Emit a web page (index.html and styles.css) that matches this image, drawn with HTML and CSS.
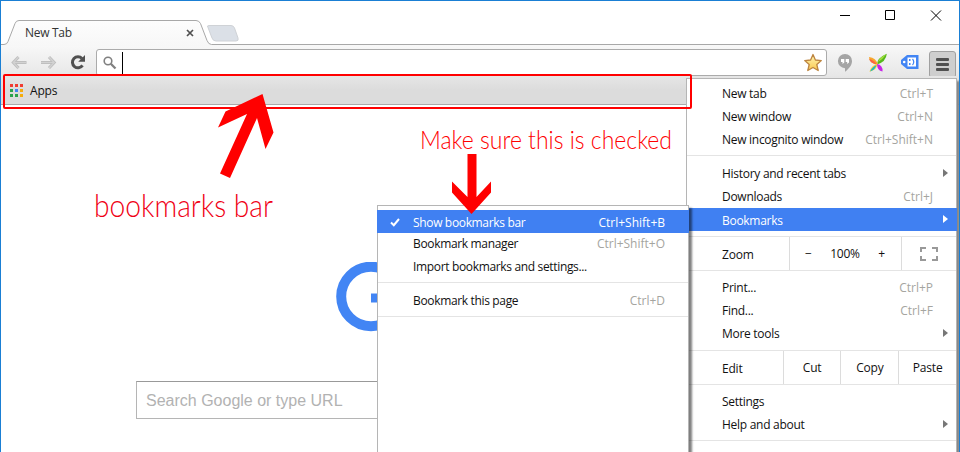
FILE: index.html
```html
<!DOCTYPE html>
<html lang="en">
<head>
<meta charset="utf-8">
<title>New Tab</title>
<link rel="stylesheet" href="styles.css">
</head>
<body>
<div class="window">
  <header class="tabstrip">
    <svg class="tabs" width="250" height="26" viewBox="0 0 250 26">
      <defs><linearGradient id="tab" x1="0" y1="0" x2="0" y2="1"><stop offset="0" stop-color="#fdfdfd"/><stop offset="1" stop-color="#f7f7f7"/></linearGradient></defs>
      <path d="M207 7.500 Q205.500 5.500 208 5.500 H230 Q232.500 5.500 233.500 8 L237 18 Q238 21 235 21 H215 Q212 21 211 18Z" fill="#dbe0e7" stroke="#cfd2d6" stroke-width="1"/>
      <path d="M0 24.500 H3 Q6 24.500 7 21.500 L14 3.500 Q15 .5 18 .5 H195 Q198 .5 199.500 3.500 L206 20.500 Q207.500 24.500 210.500 24.500 H250 V26 H0Z" fill="url(#tab)"/>
      <path d="M0 24.500 H3 Q6 24.500 7 21.500 L14 3.500 Q15 .5 18 .5 H195 Q198 .5 199.500 3.500 L206 20.500 Q207.500 24.500 210.500 24.500 H250" fill="none" stroke="#a8a8a8"/>
    </svg>
    <span class="tab-title">New Tab</span>
    <svg class="tab-close" width="8" height="8" viewBox="0 0 8 8"><path d="M1 1 7 7M7 1 1 7" stroke="#505050" stroke-width="1.700"/></svg>
    <svg class="controls" width="102" height="12" viewBox="0 0 102 12" fill="none" stroke="#000"><path d="M0 5.500H10M45.500 .5H54.500V9.500H45.500ZM91 .5 101 10.500M101 .5 91 10.500"/></svg>
  </header>
  <div class="toolbar">
    <svg class="nav" width="76" height="20" viewBox="0 0 76 20" fill="none">
      <path d="M7.500 4 2.300 9.500 7.500 15M2.500 9.500H15.500M38 4 43.200 9.500 38 15M43 9.500H30" stroke="#bfbfbf" stroke-width="3"/>
      <path d="M7.500 4 2.300 9.500 7.500 15M2.500 9.500H15.500M38 4 43.200 9.500 38 15M43 9.500H30" stroke="#d2d2d2" stroke-width="1.200"/>
      <path d="M71 5.600A5.500 5.500 0 1 0 71.500 12.400" stroke="#505050" stroke-width="3"/>
      <path d="M74 2V8.800H67.200Z" fill="#505050"/>
    </svg>
    <div class="omnibox">
      <svg width="14" height="14" viewBox="0 0 14 14" fill="none" stroke="#808080"><circle cx="5" cy="5" r="3.800" stroke-width="1.600"/><path d="M7.800 7.800 12.500 12.500" stroke-width="2.300"/></svg>
      <i class="caret"></i>
      <svg class="star" width="20" height="20" viewBox="0 0 20 20"><defs><linearGradient id="gold" x1="0" y1="0" x2="0" y2="1"><stop stop-color="#fff5b4"/><stop offset="1" stop-color="#fac94f"/></linearGradient></defs><path d="M10 1.500 12.400 7 18.300 7.600 13.800 11.500 15.200 17.500 10 14.500 4.800 17.500 6.200 11.500 1.700 7.600 7.600 7Z" fill="url(#gold)" stroke="#bd8540" stroke-width="1.300" stroke-linejoin="round"/></svg>
    </div>
    <svg class="hangouts" width="16" height="18" viewBox="0 0 16 18"><path d="M8 0A7 7 0 0 1 15 7.200C15 11.500 11 15.500 8 17.800V14.200A7 7 0 0 1 8 0Z" fill="#a5a5a5"/><path d="M4 5H7.300V8.500L5.500 10V8H4ZM8.700 5H12V8.500L10.200 10V8H8.700Z" fill="#fff"/></svg>
    <svg class="wings" width="20" height="20" viewBox="0 0 20 20"><path d="M9 11.500Q9 5 18.800 .8Q18 9 9 11.500Z" fill="#55b81c"/><path d="M10 9Q12 4 18.500 1Q15 6 10 9Z" fill="#a7df3e"/><path d="M10 12Q1 10.500 1 4Q8 4.500 10 12Z" fill="#f6a72c"/><path d="M9 11.500Q2 10 1.200 6Q6 7 9 11.500Z" fill="#fb6341"/><path d="M10 10.500Q9 17 1.500 18.800Q3 12.500 10 10.500Z" fill="#ffd237"/><path d="M8.500 12Q7 17 2 18.500Q4 14 8.500 12Z" fill="#15b8cf"/><path d="M9 11Q15 12 14.500 18.500Q9 17.500 9 11Z" fill="#c724e8"/></svg>
    <svg class="label" width="20" height="16" viewBox="0 0 20 16"><path d="M7 1H18.500V15H7L1 10V6Z" fill="#4285f4"/><circle cx="4.200" cy="8" r="1.300" fill="#fff"/><rect x="7.500" y="3.500" width="8.500" height="9" fill="#fff"/><path d="M9 5H10.500V7H9ZM9 9H10.500V11H9Z" fill="#4285f4"/><path d="M12.500 5Q15 8 12.500 11" fill="none" stroke="#4285f4" stroke-width="1.200"/></svg>
    <div class="menu-button"><i></i><i></i><i></i></div>
  </div>
  <div class="bookmarks">
    <svg width="13" height="13" viewBox="0 0 13 13"><path d="M0 0h3v3H0zM5 0h3v3H5zM10 0h3v3h-3z" fill="#f03c32"/><path d="M0 5h3v3H0zM0 10h3v3H0zM5 10h3v3H5z" fill="#2ba24c"/><path d="M5 5h3v3H5z" fill="#4285f4"/><path d="M10 5h3v3h-3zM10 10h3v3h-3z" fill="#f5ac0c"/></svg>
    <span>Apps</span>
  </div>
  <main class="page">
    <svg class="logo" width="72" height="70" viewBox="0 0 72 70"><circle cx="36" cy="34.500" r="29.800" fill="none" stroke="#4285f4" stroke-width="10"/><path d="M36 31.500H66V40.500H36Z" fill="#4285f4"/></svg>
    <div class="search">Search Google or type URL</div>
  </main>

  <nav class="menu main">
    <div class="item"><span>New tab</span><kbd>Ctrl+T</kbd></div>
    <div class="item"><span>New window</span><kbd>Ctrl+N</kbd></div>
    <div class="item"><span>New incognito window</span><kbd>Ctrl+Shift+N</kbd></div>
    <hr>
    <div class="item"><span>History and recent tabs</span><b class="arrow"></b></div>
    <div class="item"><span>Downloads</span><kbd>Ctrl+J</kbd></div>
    <div class="item active"><span>Bookmarks</span><b class="arrow"></b></div>
    <div class="strip zoom"><span class="name">Zoom</span><div class="cell stepper"><span>−</span><span>100%</span><span>+</span></div><div class="cell"><svg width="18" height="14" viewBox="0 0 18 14" fill="none" stroke="#999" stroke-width="2"><path d="M1 5V1H6M12 1H17V5M17 9V13H12M6 13H1V9"/></svg></div></div>
    <div class="item"><span>Print...</span><kbd>Ctrl+P</kbd></div>
    <div class="item"><span>Find...</span><kbd>Ctrl+F</kbd></div>
    <div class="item"><span>More tools</span><b class="arrow"></b></div>
    <div class="strip edit"><span class="name">Edit</span><span class="cell">Cut</span><span class="cell">Copy</span><span class="cell">Paste</span></div>
    <div class="item"><span>Settings</span></div>
    <div class="item"><span>Help and about</span><b class="arrow"></b></div>
    <hr>
  </nav>

  <nav class="menu sub">
    <div class="item active"><svg class="check" width="10" height="9" viewBox="0 0 10 9"><path d="M1 4.500 3.800 7.200 9 1" fill="none" stroke="#fff" stroke-width="2"/></svg><span>Show bookmarks bar</span><kbd>Ctrl+Shift+B</kbd></div>
    <div class="item manager"><span>Bookmark manager</span><kbd>Ctrl+Shift+O</kbd></div>
    <div class="item import"><span>Import bookmarks and settings...</span></div>
    <hr>
    <div class="item"><span>Bookmark this page</span><kbd>Ctrl+D</kbd></div>
    <hr>
  </nav>

  <svg class="notes" width="960" height="452" viewBox="0 0 960 452">
    <rect x="4" y="75" width="687" height="33" rx="1" fill="none" stroke="#f00" stroke-width="2"/>
    <path d="M262.500 94 273.500 132.500 265.500 149 257 118 230 178 220 173.500 247 114 218 127.500 225.500 111.500Z" fill="#f00"/>
    <path d="M467.500 154H476.500V197L491 181.500V192.500L471.500 214 452 192.500V181.500L467.500 197Z" fill="#f00"/>
    <text x="94" y="217" font-size="30.500" textLength="179" lengthAdjust="spacingAndGlyphs">bookmarks bar</text>
    <text class="pure" x="420" y="149" font-size="24.500" textLength="252" lengthAdjust="spacingAndGlyphs">Make sure this is checked</text>
  </svg>
</div>
</body>
</html>
```
FILE: styles.css
```css
* { box-sizing: border-box; }
body { margin: 0; background: #fff; font: 12px/23px "Open Sans", "Noto Sans", sans-serif; color: #111; }
.window { position: relative; width: 960px; height: 452px; overflow: hidden; display: flex; flex-direction: column; border: solid #1a7fd4; border-width: 1px 1px 0; }
.tabstrip { position: relative; height: 44px; flex: none; display: flex; padding-top: 20px; }
.tabstrip::before { content: ""; position: absolute; left: 249px; right: 0; bottom: 0; height: 1px; background: #a8a8a8; }
.tabs { position: absolute; left: 0; top: 19px; }
.tab-title { position: relative; margin-left: 24px; width: 161px; color: #333; letter-spacing: -.3px; }
.tab-close { position: relative; margin-top: 8px; }
.controls { margin: -11px 17px 0 auto; }
.toolbar { height: 31px; flex: none; display: flex; padding-left: 10px; background: linear-gradient(#f8f8f8, #e7e7e7); }
.nav { margin-top: 8px; }
.omnibox { width: 731px; height: 27px; margin: 4px 0 0 9px; padding: 0 3px 0 6px; display: flex; align-items: center; background: #fff; border: 1px solid #ababab; border-radius: 3px; }
.caret { width: 1px; height: 22px; margin-left: 5px; background: #000; }
.star { margin-left: auto; }
.hangouts { margin: 9px 0 0 10px; }
.wings { margin: 8px 0 0 15px; }
.label { margin: 9px 0 0 12px; }
.menu-button { width: 27px; height: 27px; margin: 6px 0 0 9px; padding: 6px; border: 1px solid #a0a0a0; border-radius: 3px; background: #cecece; display: flex; flex-direction: column; gap: 2px; }
.menu-button i { height: 3px; border-radius: 1px; background: #505050; }
.bookmarks { height: 29px; flex: none; display: flex; align-items: center; padding: 0 0 0 9px; background: linear-gradient(#e6e6e6, #dcdcdc 50%); border-bottom: 1px solid #aaa; }
.bookmarks span { margin-left: 7px; letter-spacing: -.2px; }
.page { flex: 1; display: flex; flex-direction: column; }
.logo { margin: 157px 0 0 334px; }
.search { margin: 49px 0 0 135px; width: 580px; height: 38px; border: 1px solid #b5b5b5; border-top-color: #999; padding-left: 9px; font: 16px/37px "Liberation Sans", Arial, sans-serif; color: #b2b2b2; }
.menu { position: absolute; background: #fff; border: 1px solid #b5b5b5; }
.main { left: 685px; top: 77px; width: 271px; height: 390px; padding-top: 3px; box-shadow: 3px 3px 2px #888; }
.sub { left: 376px; top: 204px; width: 312px; height: 280px; padding-top: 4px; box-shadow: 3px 3px 2px rgba(0,0,0,.5); }
.item { display: flex; height: 23px; padding-left: 35px; padding-right: 23px; }
.item span { letter-spacing: -.28px; }
.main .active { margin: 0 -1px; padding-left: 36px; line-height: 25px; }
.sub .item { position: relative; padding-right: 23px; }
.item kbd { margin-left: auto; font: inherit; color: #a5a5a0; }
.item.active, .active kbd { color: #fff; }
.item.active { background: #4080f2; font-weight: 500; }
.sub .active { margin: 0 -1px; padding-left: 36px; padding-right: 24px; line-height: 25px; }
.sub .item span { letter-spacing: -.34px; }
.sub .manager { margin-top: -1px; }
.check { position: absolute; left: 13px; top: 8px; }
.arrow { width: 0; height: 0; margin: 7px -15px 0 auto; border: solid transparent; border-width: 4px 0 4px 5px; border-left-color: #777; }
.active .arrow { border-left-color: #fff; margin-right: -14px; }
hr { height: 1px; margin: 4px 0 6px; border: 0; background: #e4e4e4; }
.strip { display: flex; height: 35px; margin: 5px 0; border: solid #e4e4e4; border-width: 1px 0; line-height: 35px; letter-spacing: -.2px; }
.zoom .name { width: 102px; padding-left: 35px; }
.edit .name { width: 96px; padding-left: 35px; }
.cell { width: 58px; border-left: 1px solid #dcdcdc; display: flex; align-items: center; justify-content: center; }
.zoom .cell { width: 55px; }
.zoom .stepper { width: 112px; justify-content: space-between; padding: 0 16px 0 15px; line-height: 33px; }
.edit .cell { line-height: 33px; }
.notes { position: absolute; left: -1px; top: -1px; font-family: Lato, "Open Sans", sans-serif; font-weight: 300; fill: #f00014; }
.notes .pure { fill: #f00; }
```
